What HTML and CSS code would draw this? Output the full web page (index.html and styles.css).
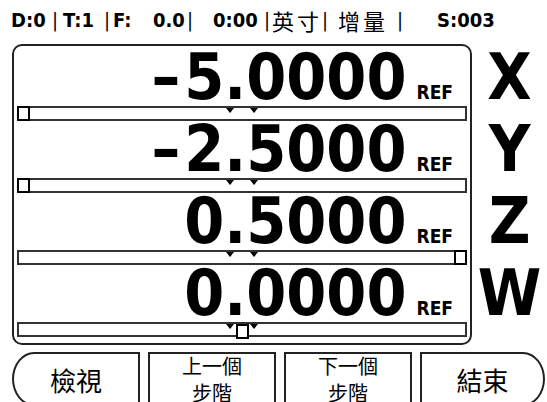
FILE: index.html
```html
<!DOCTYPE html>
<html lang="zh-Hant">
<head>
  <meta charset="UTF-8">
  <title>DRO</title>
  <meta name="viewport" content="width=device-width, initial-scale=1">
  <link rel="stylesheet" href="styles.css">
</head>
<body>
  <div class="status">
    <span>D:0</span><span class="pipe">|</span>
    <span>T:1</span><span class="pipe">|</span>
    <span>F:</span><span>0.0</span><span class="pipe">|</span>
    <span>0:00</span><span class="pipe">|</span>
    <span class="cjk">英寸</span><span class="pipe">|</span>
    <span class="cjk">增量</span><span class="pipe">|</span>
    <span>S:003</span>
  </div>

  <div class="main">
    <div class="readout">
      <div class="row">
        <div class="value"><span class="sign">–</span><span>5.0000</span><span class="ref">REF</span></div>
        <div class="bar">
          <span class="knob"></span>
          <i class="mark l"></i><i class="mark r"></i>
        </div>
      </div>
      <div class="row">
        <div class="value"><span class="sign">–</span><span>2.5000</span><span class="ref">REF</span></div>
        <div class="bar">
          <span class="knob"></span>
          <i class="mark l"></i><i class="mark r"></i>
        </div>
      </div>
      <div class="row">
        <div class="value"><span>0.5000</span><span class="ref">REF</span></div>
        <div class="bar end">
          <span class="knob"></span>
          <i class="mark l"></i><i class="mark r"></i>
        </div>
      </div>
      <div class="row">
        <div class="value"><span>0.0000</span><span class="ref">REF</span></div>
        <div class="bar mid">
          <span class="knob"></span>
          <i class="mark l"></i><i class="mark r"></i>
        </div>
      </div>
    </div>

    <div class="axes">
      <div>X</div>
      <div>Y</div>
      <div>Z</div>
      <div>W</div>
    </div>
  </div>

  <div class="keys">
    <div class="key first">檢視</div>
    <div class="key two">上一個<br>步階</div>
    <div class="key two">下一個<br>步階</div>
    <div class="key last">結束</div>
  </div>
</body>
</html>
```

FILE: styles.css
```css
body {
  margin: 0;
  width: 547px;
  height: 402px;
  overflow: hidden;
  background: #fff;
  color: #000;
  font-family: "DejaVu Sans Condensed", "DejaVu Sans", sans-serif;
  font-stretch: condensed;
}

/* top status line */
.status {
  display: grid;
  grid-template-columns: 41px 11px 41px 9px 40px 34px 26px 51px 8px 50px 16px 59px 40px auto;
  height: 20px;
  padding: 10px 0 14px 11px;
  font-size: 20px;
  line-height: 20px;
  font-weight: bold;
  white-space: nowrap;
}
.status .pipe {
  font-weight: normal;
}
.status .cjk {
  font-family: "Noto Sans CJK TC", sans-serif;
  font-weight: normal;
  font-size: 22px;
  letter-spacing: 3px;
}

/* position display */
.main {
  display: flex;
}
.readout {
  margin-left: 12px;
  width: 460px;
  height: 301px;
  box-sizing: border-box;
  border: 2px solid #222;
  border-radius: 10px;
  padding: 3px 3px 6px;
}
.value {
  height: 57px;
  line-height: 57px;
  display: flex;
  justify-content: flex-end;
  align-items: baseline;
  padding-right: 14px;
  font-size: 64px;
  font-weight: bold;
}
.sign {
  margin-right: 4px;
}
.ref {
  font-size: 19px;
  line-height: normal;
  margin-left: 10px;
}
.bar {
  position: relative;
  display: flex;
  height: 15px;
  box-sizing: border-box;
  border: 2px solid #333;
}
.bar.end {
  justify-content: flex-end;
}
.bar.mid {
  justify-content: center;
}
.knob {
  width: 13px;
  height: 15px;
  box-sizing: border-box;
  margin: -2px;
  border: 2px solid #000;
  background: #fff;
}
.bar.mid .knob {
  margin: 0;
}
.mark {
  position: absolute;
  top: 0;
  width: 0;
  height: 0;
  border-left: 4px solid transparent;
  border-right: 4px solid transparent;
  border-top: 5px solid #000;
}
.mark.l {
  left: calc(50% - 16px);
}
.mark.r {
  left: calc(50% + 8px);
}

/* axis letters */
.axes {
  width: 75px;
  padding-top: 5px;
  text-align: center;
  font-size: 64px;
  font-weight: bold;
}
.axes div {
  height: 72px;
  line-height: 57px;
}

/* soft keys */
.keys {
  display: flex;
  gap: 8px;
  margin-top: 7px;
  padding-left: 12px;
}
.key {
  width: 128px;
  height: 54px;
  box-sizing: border-box;
  border: 2px solid #222;
  display: flex;
  flex-direction: column;
  justify-content: center;
  align-items: center;
  text-align: center;
  font-family: "Noto Sans CJK TC", sans-serif;
  font-size: 26px;
  line-height: 27px;
}
.key.two {
  font-size: 20px;
}
.key.first {
  border-radius: 22px 0 0 22px / 27px 0 0 27px;
}
.key.last {
  width: 125px;
  border-radius: 0 22px 22px 0 / 0 27px 27px 0;
}
```
